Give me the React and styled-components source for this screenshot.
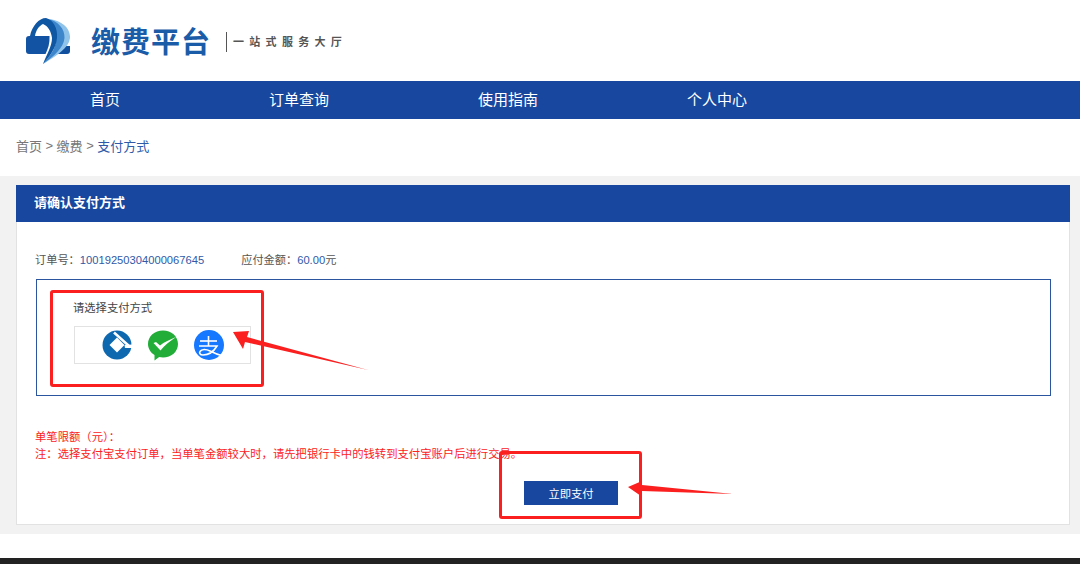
import React from "react";
import styled, { createGlobalStyle } from "styled-components";

const GlobalStyle = createGlobalStyle`
  html, body {
    margin: 0;
    padding: 0;
    background: #fff;
    font-family: "Liberation Sans", "Noto Sans CJK SC", sans-serif;
  }
`;

const Page = styled.div`
  position: relative;
  width: 1080px;
  height: 564px;
  overflow: hidden;
  background: #fff;
`;

const Header = styled.header`
  height: 81px;
  display: flex;
  align-items: center;
  padding-left: 26px;
  box-sizing: border-box;
`;

const LogoName = styled.div`
  margin-left: 21px;
  font-family: "Noto Sans CJK SC", serif;
  font-weight: 700;
  font-size: 29px;
  letter-spacing: 1px;
  color: #1a5ca8;
  line-height: 1;
`;

const Slogan = styled.div`
  margin-left: 15px;
  margin-top: 2px;
  padding-left: 6px;
  border-left: 1px solid #555;
  height: 20px;
  line-height: 20px;
  font-size: 11px;
  font-weight: 700;
  letter-spacing: 5.3px;
  color: #555;
`;

const Nav = styled.nav`
  height: 38px;
  background: #17479e;
  display: flex;
  align-items: center;
  gap: 149px;
  padding: 0 0 3px 90px;
  box-sizing: border-box;
`;

const NavItem = styled.a`
  color: #fff;
  font-size: 15px;
`;

const Crumbs = styled.div`
  height: 57px;
  display: flex;
  align-items: center;
  padding: 0 0 5px 16px;
  box-sizing: border-box;
  font-size: 13px;
  color: #777;
  gap: 3.5px;
`;

const CrumbCurrent = styled.span`
  color: #2f5aa8;
`;

const Band = styled.main`
  background: #f2f2f2;
  height: 358px;
  padding: 9px 10px 10px 16px;
  box-sizing: border-box;
`;

const Panel = styled.section`
  height: 340px;
  background: #fff;
  border: 1px solid #e2e2e2;
  border-top: 0;
  box-sizing: border-box;
  display: flex;
  flex-direction: column;
`;

const PanelTitle = styled.h2`
  margin: 0 -1px;
  height: 37px;
  line-height: 35px;
  background: #17479e;
  color: #fff;
  font-size: 13px;
  font-weight: 700;
  padding-left: 18px;
`;

const OrderRow = styled.div`
  display: flex;
  gap: 37px;
  margin: 31px 0 0 18px;
  font-size: 11.2px;
  line-height: 14px;
  color: #555;
`;

const Value = styled.span`
  color: #2f5aa8;
`;

const PayBox = styled.div`
  margin: 12px 18px 0 19px;
  height: 117px;
  border: 1px solid #2c55a0;
  box-sizing: border-box;
  padding: 21px 0 0 36px;
`;

const PayLabel = styled.div`
  font-size: 11.3px;
  line-height: 14px;
  color: #444;
`;

const PayMethods = styled.div`
  margin: 11px 0 0 1px;
  width: 177px;
  height: 38px;
  border: 1px solid #e2e2e2;
  box-sizing: border-box;
  display: flex;
  align-items: center;
  gap: 16px;
  padding-left: 27px;
`;

const Notes = styled.div`
  margin: 33px 0 0 18px;
  font-size: 11.33px;
  line-height: 17px;
  color: #fb2222;
  white-space: nowrap;
`;

const PayRow = styled.div`
  display: flex;
  justify-content: center;
  margin-top: 18px;
  padding-left: 56px;
`;

const PayButton = styled.button`
  width: 94px;
  height: 24px;
  border: 0;
  padding: 0;
  background: #17479e;
  color: #fff;
  font-family: inherit;
  font-size: 11.3px;
`;

const Footer = styled.footer`
  margin-top: 24px;
  height: 6px;
  background: #222;
`;

const Callout = styled.div`
  position: absolute;
  left: ${(p) => p.$x}px;
  top: ${(p) => p.$y}px;
  width: ${(p) => p.$w}px;
  height: ${(p) => p.$h}px;
  border: 3px solid #fb1f1f;
  border-radius: 3px;
  box-sizing: border-box;
`;

const Overlay = styled.svg`
  position: absolute;
  left: 0;
  top: 0;
  pointer-events: none;
`;

const LogoMark = () => (
  <svg width="44" height="46" viewBox="0 0 44 46">
    <path d="M25 36 C29 34 32 31 34 28 L44 28 L44 33 C44 35 43 36 41 36Z" fill="#0f4f9e" />
    <path d="M24 1 C36 3 44.5 10 44 20 C43 30 30 38 17 46 C26 36 33 28 33 18Z" fill="#8fc3ea" />
    <path d="M22 1 C32 3 39 11 38.5 20 C37.5 30 28 38 17 46 C26 36 31 28 30 18Z" fill="#3d86cc" />
    <path d="M4 18 C6 8 13 0 20 0 C27 2 32 10 31 20 C30 30 24 38 17 46 C21 36 26 28 26 20 C25 13 22 8 17 6 C13 8 10 12 9 18Z" fill="#0f56a3" />
    <path d="M3 18 H23.5 C24 25 22 31 19.5 36 H3 C1 36 0 35 0 33 V21 C0 19 1 18 3 18Z" fill="#1353a3" />
  </svg>
);

const CcbIcon = () => (
  <svg width="30" height="30" viewBox="0 0 30 30">
    <circle cx="15" cy="15" r="14.5" fill="#0d68b0" />
    <path d="M15 7.5 L22.5 15 L15 22.5 L7.5 15Z" fill="#fff" />
    <path d="M12 2.5 L27 16" stroke="#fff" strokeWidth="2.5" fill="none" />
    <path d="M22.5 15 L30 14.5 L30 18 L23 18Z" fill="#fff" />
  </svg>
);

const WechatIcon = () => (
  <svg width="30" height="31" viewBox="0 0 30 31">
    <path d="M15 0.5 C23.3 0.5 30 6.3 30 14 C30 21.7 23.3 27.5 15 27.5 C13.6 27.5 12.4 27.3 11.2 27 L6.5 30.5 L6.5 25 C2.6 22.6 0 18.6 0 14 C0 6.3 6.7 0.5 15 0.5Z" fill="#22ac38" />
    <path d="M5.5 13 L8 12 L12 15.5 C16 12 22 9.5 28 7 C22 11 16 16 12.5 20.5Z" fill="#fff" />
  </svg>
);

const AlipayIcon = () => (
  <svg width="30" height="30" viewBox="0 0 30 30">
    <circle cx="15" cy="15" r="15" fill="#1677ff" />
    <g fill="none" stroke="#fff" strokeWidth="1.6">
      <path d="M6 11 H23" />
      <path d="M14.5 6 V16" />
      <path d="M5 16 H23 C20 21 15 25 9 25 C6 25 5 23 6 21.5 C7.5 19 12 19 16 21 C20 23 25 25 29 26" />
    </g>
  </svg>
);

export default function App() {
  return (
    <Page>
      <GlobalStyle />
      <Header>
        <LogoMark />
        <LogoName>缴费平台</LogoName>
        <Slogan>一站式服务大厅</Slogan>
      </Header>
      <Nav>
        <NavItem>首页</NavItem>
        <NavItem>订单查询</NavItem>
        <NavItem>使用指南</NavItem>
        <NavItem>个人中心</NavItem>
      </Nav>
      <Crumbs>
        <span>首页</span>
        <span>&gt;</span>
        <span>缴费</span>
        <span>&gt;</span>
        <CrumbCurrent>支付方式</CrumbCurrent>
      </Crumbs>
      <Band>
        <Panel>
          <PanelTitle>请确认支付方式</PanelTitle>
          <OrderRow>
            <span>
              订单号：<Value>10019250304000067645</Value>
            </span>
            <span>
              应付金额：<Value>60.00</Value>元
            </span>
          </OrderRow>
          <PayBox>
            <PayLabel>请选择支付方式</PayLabel>
            <PayMethods>
              <CcbIcon />
              <WechatIcon />
              <AlipayIcon />
            </PayMethods>
          </PayBox>
          <Notes>
            <div>单笔限额（元）：</div>
            <div>注：选择支付宝支付订单，当单笔金额较大时，请先把银行卡中的钱转到支付宝账户后进行交易。</div>
          </Notes>
          <PayRow>
            <PayButton>立即支付</PayButton>
          </PayRow>
        </Panel>
      </Band>
      <Footer />
      <Callout $x={50} $y={290} $w={214} $h={97} />
      <Callout $x={499} $y={451} $w={143} $h={68} />
      <Overlay width="1080" height="564">
        <path d="M233 332 L249 331 L247 337 L368 370 L245 342 L243 349Z" fill="#fb1f1f" />
        <path d="M628 487 L642 481 L642 485 L733 494 L642 491 L641 496Z" fill="#fb1f1f" />
      </Overlay>
    </Page>
  );
}
